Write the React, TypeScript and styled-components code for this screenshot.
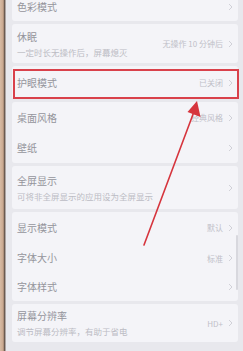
import React from "react";
import styled, { createGlobalStyle } from "styled-components";

const Global = createGlobalStyle`
  html, body { margin: 0; padding: 0; }
  body { width: 243px; height: 351px; overflow: hidden; background: #e8e8ed;
    font-family: "Noto Sans CJK SC", "Noto Sans", sans-serif; }
`;

const Page = styled.div`
  position: relative;
  display: flex;
  width: 243px;
  height: 351px;
  overflow: hidden;
`;

const Bezel = styled.div`
  width: 6px;
  flex: none;
  background: linear-gradient(90deg, #d8bba4 0%, #c9a78e 55%, #5b4a40 70%, #8a7a70 85%, #dcdce2 100%);
`;

const Screen = styled.div`
  flex: 1;
  display: flex;
  flex-direction: column;
  gap: 3px;
  padding: 0 5px 0 6px;
  margin-top: -8px;
  background: #e8e8ed;
`;

const Card = styled.div`
  display: flex;
  flex-direction: column;
  background: #f4f4f8;
  border-radius: 3px;
`;

const Row = styled.div<{ $h: number }>`
  height: ${(p) => p.$h}px;
  display: flex;
  align-items: center;
  padding: 0 5px 0 5px;
`;

const Texts = styled.div`
  flex: 1;
  display: flex;
  flex-direction: column;
  gap: 4px;
  min-width: 0;
`;

const Title = styled.div`
  font-size: 10px;
  line-height: 12px;
  color: #94949c;
  white-space: nowrap;
`;

const Sub = styled.div`
  font-size: 8.5px;
  line-height: 10px;
  color: #bcbcc4;
  white-space: nowrap;
`;

const Value = styled.div`
  font-size: 8px;
  color: #c0c0c8;
  white-space: nowrap;
  margin-right: 5px;
`;

const Chevron = styled.svg`
  width: 5px;
  height: 8px;
  flex: none;
`;

const Highlight = styled.div`
  position: absolute;
  left: 13px;
  top: 69px;
  width: 222px;
  height: 26px;
  border: 2px solid #d9414b;
  pointer-events: none;
`;

const Overlay = styled.svg`
  position: absolute;
  left: 0;
  top: 0;
  pointer-events: none;
`;

const Scrollbar = styled.div`
  position: absolute;
  right: 5px;
  top: 235px;
  width: 2px;
  height: 55px;
  border-radius: 1px;
  background: #d8d8de;
`;

type Item = { title: string; sub?: string; value?: string; h: number };

const groups: Item[][] = [
  [{ title: "色彩模式", h: 29 }],
  [{ title: "休眠", sub: "一定时长无操作后，屏幕熄灭", value: "无操作 10 分钟后", h: 39 }],
  [{ title: "护眼模式", value: "已关闭", h: 33 }],
  [
    { title: "桌面风格", value: "经典风格", h: 31 },
    { title: "壁纸", h: 30 },
  ],
  [{ title: "全屏显示", sub: "可将非全屏显示的应用设为全屏显示", h: 43 }],
  [
    { title: "显示模式", value: "默认", h: 31 },
    { title: "字体大小", value: "标准", h: 30 },
    { title: "字体样式", h: 28 },
  ],
  [{ title: "屏幕分辨率", sub: "调节屏幕分辨率，有助于省电", value: "HD+", h: 38 }],
];

const Arrow = () => (
  <Chevron viewBox="0 0 5 8">
    <path d="M1 1 L4 4 L1 7" fill="none" stroke="#cdcdd4" strokeWidth="0.9" />
  </Chevron>
);

export default function App() {
  return (
    <Page>
      <Global />
      <Bezel />
      <Screen>
        {groups.map((g, gi) => (
          <Card key={gi}>
            {g.map((it) => (
              <Row key={it.title} $h={it.h}>
                <Texts>
                  <Title>{it.title}</Title>
                  {it.sub && <Sub>{it.sub}</Sub>}
                </Texts>
                {it.value && <Value>{it.value}</Value>}
                <Arrow />
              </Row>
            ))}
          </Card>
        ))}
      </Screen>
      <Scrollbar />
      <Highlight />
      <Overlay width="243" height="351" viewBox="0 0 243 351">
        <path d="M144 245 L193.5 113" stroke="#d6343d" strokeWidth="1.6" strokeLinecap="round" />
        <polygon points="197,101 200.5,117 187.5,112" fill="#d6343d" />
      </Overlay>
    </Page>
  );
}
